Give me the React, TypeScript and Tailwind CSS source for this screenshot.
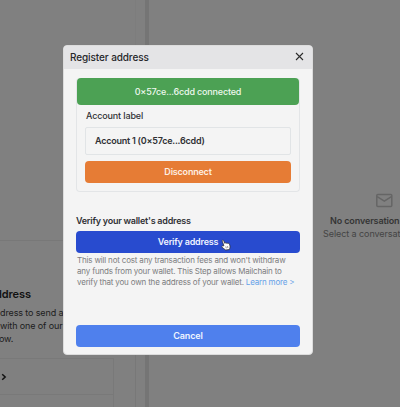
import React from "react";

function Backdrop() {
  return (
    <div className="flex h-full w-full bg-[#808080]">
      <aside className="flex w-[145px] shrink-0 flex-col overflow-hidden">
        <div className="h-[240px] w-[136px] shrink-0 border-r border-[#7d7d7d]" />
        <section className="h-[167px] w-[136px] shrink-0 overflow-hidden whitespace-nowrap border-r border-t border-[#787878] pt-[45px]">
          <h2 className="-ml-[5px] text-[11px] font-semibold leading-[16px] tracking-[-0.1px] text-[#111]">ddress</h2>
          <p className="mt-[4px] text-[9px] leading-[13px] tracking-[-0.12px] text-[#1c1c1c]">
            dress to send a
            <br />
            with one of our
            <br />
            <span className="-ml-px">ow.</span>
          </p>
          <ul className="mt-[13px] w-[114px] border-r border-t border-[#797979]">
            <li className="flex h-[36px] items-center border-b border-[#797979]">
              <svg className="ml-px h-[8px] w-[6px]" viewBox="0 0 6 8" fill="none" stroke="#111" strokeWidth="1.5">
                <path d="M1.2 1.2 4.2 4 1.2 6.8" />
              </svg>
            </li>
            <li className="h-[20px]" />
          </ul>
        </section>
      </aside>
      <div className="w-[4px] shrink-0 bg-[#757575]" />
      <main className="flex flex-1 flex-col overflow-hidden whitespace-nowrap pt-[192px]">
        <svg className="ml-[226px] h-[17px] w-[19px]" viewBox="0 0 19 17" fill="none" stroke="#656565" strokeWidth="1.5">
          <rect x="1.800" y="2.600" width="15" height="11.800" rx="1" />
          <path d="m2.200 4.600 7.100 4.500 7.100-4.500" />
        </svg>
        <p className="ml-[181px] mt-[5px] text-[9px] font-semibold leading-[13px] tracking-[-0.12px] text-[#353535]">No conversation</p>
        <p className="ml-[174px] text-[9px] leading-[13px] tracking-[-0.07px] text-[#444]">Select a conversat</p>
      </main>
    </div>
  );
}

function Cursor() {
  return (
    <svg className="absolute left-[145px] top-[8px] h-[12px] w-[10px]" viewBox="0 0 10 12" fill="#fff" stroke="#333" strokeWidth="0.8" strokeLinejoin="round">
      <path d="M2.900 6.800 1.300 2.300C.9 1.100 2.200.6 2.700 1.700l1.100 2.600c.4-.6 1.200-.6 1.500 0 .5-.5 1.300-.4 1.500.2.6-.4 1.300-.1 1.600.6.5 1.200 1 2.700.4 4.200L8.300 10.600 4.700 11C3.600 10.200 2.200 9.200 1 8.300.2 7.500 1.100 6.500 2.900 6.800z" />
      <path d="m4.800 7.400.5 1.900M6.500 7.100l.4 1.900" strokeWidth="0.500" />
    </svg>
  );
}

function Modal() {
  return (
    <div className="absolute left-[63px] top-[45px] flex h-[310px] w-[250px] flex-col overflow-hidden rounded-[4px] border border-[#dcdcdc] bg-[#f4f4f4] text-[#303134]">
      <header className="flex h-[23px] shrink-0 items-center justify-between bg-[#e4e4e6] pl-[6px] pr-[8px]">
        <h1 className="relative -top-px text-[10px] font-medium leading-[12px] tracking-[-0.1px] text-[#26272a]">Register address</h1>
        <svg className="relative -top-px h-[9px] w-[9px]" viewBox="0 0 9 9" stroke="#2c2c2c" strokeWidth="1.1">
          <path d="m1 1 7 7M8 1 1 8" />
        </svg>
      </header>
      <div className="flex flex-col px-[12px] pt-[9px]">
        <div className="flex h-[114px] flex-col rounded-[4px] border border-t-0 border-[#e3e5e7]">
          <div className="flex h-[27px] shrink-0 items-center justify-center rounded-[4px] bg-[#4ca154] text-[9px] font-medium tracking-[-0.18px] text-[#eef8ee]">
            0×57ce...6cdd connected
          </div>
          <div className="flex flex-col px-[8px] pt-[5px]">
            <label className="pl-px text-[9px] font-medium leading-[12px] tracking-[-0.14px]">Account label</label>
            <div className="mt-[5px] flex h-[28px] items-center rounded-[2px] border border-[#e1e4e6] pl-[9px] text-[9px] font-semibold tracking-[-0.23px]">
              Account 1 (0×57ce...6cdd)
            </div>
            <button className="mt-[6px] h-[22px] rounded-[4px] bg-[#e67c35] text-[9px] font-semibold tracking-[-0.2px] text-[#fdeee2]">Disconnect</button>
          </div>
        </div>
        <h2 className="mt-[23px] text-[9px] font-semibold leading-[12px] tracking-[-0.24px]">Verify your wallet's address</h2>
        <button className="relative mt-[4px] h-[22px] rounded-[4px] bg-[#284bcf] text-[9px] font-semibold tracking-[-0.2px] text-[#eef2ff]">
          Verify address
          <Cursor />
        </button>
        <p className="mt-[2px] whitespace-nowrap pl-px text-[8px] leading-[11px] tracking-[-0.18px] text-[#7c7d80]">
          This will not cost any transaction fees and won't withdraw
          <br />
          any funds from your wallet. This Step allows Mailchain to
          <br />
          verify that you own the address of your wallet. <a className="text-[#65a1e8]">Learn more &gt;</a>
        </p>
        <button className="mt-[37px] h-[22px] rounded-[4px] bg-[#4f80ed] text-[9px] font-semibold tracking-[-0.1px] text-[#eef4ff]">Cancel</button>
      </div>
    </div>
  );
}

export default function App() {
  return (
    <div className="relative h-[407px] w-[400px] overflow-hidden font-['Inter',sans-serif]">
      <Backdrop />
      <Modal />
    </div>
  );
}
